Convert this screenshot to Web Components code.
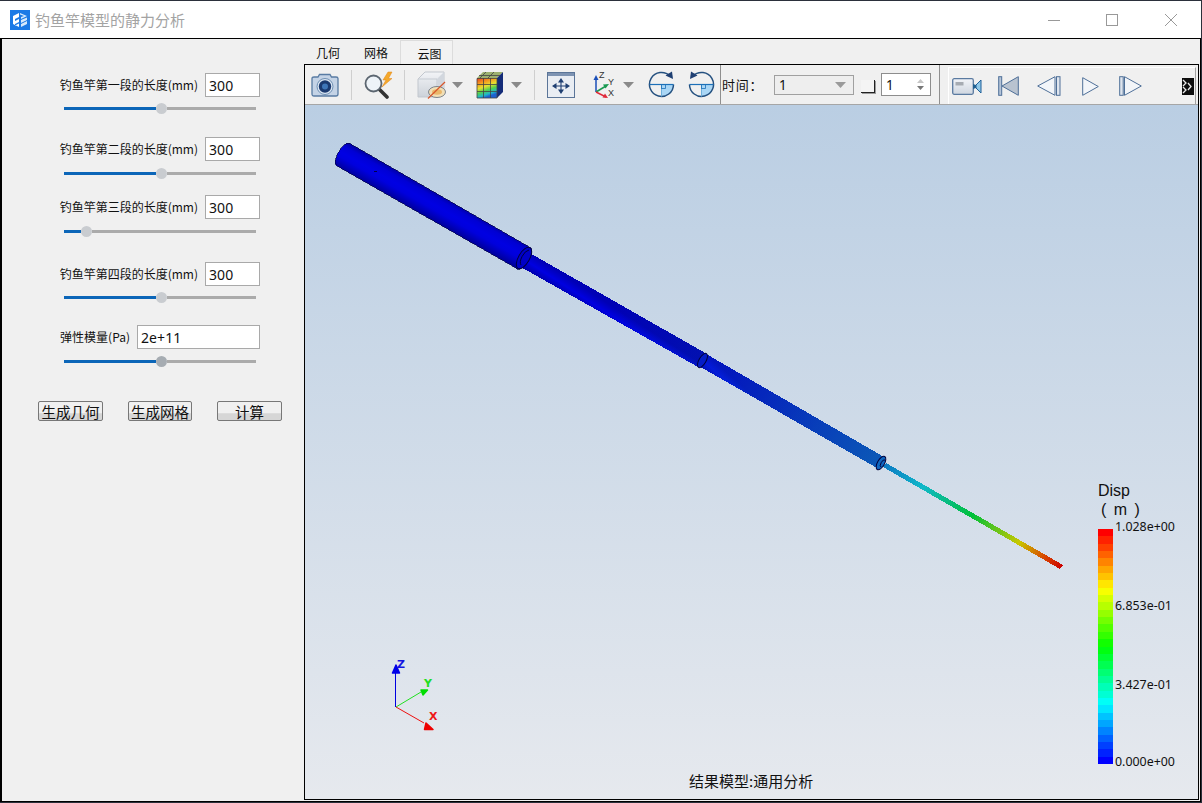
<!DOCTYPE html>
<html lang="zh">
<head>
<meta charset="utf-8">
<title>钓鱼竿模型的静力分析</title>
<style>
html, body { margin: 0; height: 100%; background: #2b303b; overflow: hidden; }
param-row.r1 { margin-top: 34px; --gap: 6px; }
param-row.r2 { margin-top: 23px; --gap: 7px; }
param-row.r3 { margin-top: 16px; --gap: 7px; }
param-row.r4 { margin-top: 25px; --gap: 6px; }
param-row.r5 { margin-top: 22px; --gap: 7px; }
</style>
</head>
<body>
<app-window>
  <title-bar slot="title" text="钓鱼竿模型的静力分析"></title-bar>
  <side-panel slot="side">
    <param-row class="r1" label="钓鱼竿第一段的长度(mm)" value="300" pos="97"></param-row>
    <param-row class="r2" label="钓鱼竿第二段的长度(mm)" value="300" pos="97"></param-row>
    <param-row class="r3" label="钓鱼竿第三段的长度(mm)" value="300" pos="22"></param-row>
    <param-row class="r4" label="钓鱼竿第四段的长度(mm)" value="300" pos="97"></param-row>
    <param-row class="r5" label="弹性模量(Pa)" value="2e+11" pos="97" wide></param-row>
  </side-panel>
  <result-pane slot="main"></result-pane>
</app-window>

<script>
// outer frame: title bar on top, black-edged client area below
customElements.define("app-window", class extends HTMLElement {
  constructor() {
    super();
    this.attachShadow({ mode: "open" });
    this.shadowRoot.innerHTML = `
<style>
:host {
  display: flex;
  flex-direction: column;
  width: 1202px;
  height: 803px;
  box-sizing: border-box;
  padding: 1px 1px 1px 0;
  font-family: "Noto Sans CJK SC", "Noto Sans", sans-serif;
  color: #111;
}
#client {
  flex: 1;
  min-height: 0;
  display: flex;
  background: #f0f0f0;
  border: 1px solid #000;
  border-left-width: 2px;
  border-right-width: 1px;
}
</style>
<slot name="title"></slot>
<div id="client">
  <slot name="side"></slot>
  <slot name="main"></slot>
</div>`;
  }
});

customElements.define("title-bar", class extends HTMLElement {
  constructor() {
    super();
    this.attachShadow({ mode: "open" });
    this.shadowRoot.innerHTML = `
<style>
:host {
  display: flex;
  align-items: center;
  height: 37px;
  background: #fff;
  padding-left: 10px;
  font-size: 15px;
  color: #a3a3a3;
}
svg { display: block; flex: none; }
#name { margin-left: 5px; }
#btns { margin-left: auto; margin-right: 1px; display: flex; }
.b { width: 58px; height: 37px; display: flex; align-items: center; justify-content: center; }
.b.mid { margin-right: 1px; }
</style>
<svg width="20" height="20" viewBox="0 0 20 20">
  <rect width="20" height="20" fill="#1b7ae6"/>
  <path d="M3 6 L9 3 V7 L5 9 V11 L9 9 V12 L5 14 V15.5 L9 13.5 V17 L3 14 Z" fill="#fff"/>
  <path d="M10 3 L17 6 L11 9 L11 7 L14 6 L10 4.5 Z M11 10 L17 7.5 V10 L11 13 Z M11 14 L17 11 V14 L11 17 Z" fill="#d6e9fb"/>
</svg>
<span id="name"></span>
<div id="btns">
  <div class="b"><svg width="12" height="12"><path d="M0 6.5 H12" stroke="#999"/></svg></div>
  <div class="b mid"><svg width="12" height="12"><rect x=".5" y=".5" width="11" height="11" fill="none" stroke="#999"/></svg></div>
  <div class="b"><svg width="12" height="12"><path d="M0 0 L12 12 M12 0 L0 12" stroke="#999"/></svg></div>
</div>`;
    this.shadowRoot.getElementById("name").textContent = this.getAttribute("text");
  }
});

customElements.define("side-panel", class extends HTMLElement {
  constructor() {
    super();
    this.attachShadow({ mode: "open" });
    this.shadowRoot.innerHTML = `
<style>
:host { display: flex; flex-direction: column; flex: none; width: 302px; }
#actions { display: flex; gap: 25px; padding-left: 36px; margin-top: 34px; }
qt-button:nth-child(2) { width: 64px; }
</style>
<slot></slot>
<div id="actions">
  <qt-button>生成几何</qt-button>
  <qt-button>生成网格</qt-button>
  <qt-button>计算</qt-button>
</div>`;
  }
});

customElements.define("param-row", class extends HTMLElement {
  constructor() {
    super();
    this.attachShadow({ mode: "open" });
    const wide = this.hasAttribute("wide");
    const pos = Number(this.getAttribute("pos"));
    this.shadowRoot.innerHTML = `
<style>
:host { display: block; }
#line { display: flex; align-items: center; justify-content: flex-end; padding-right: 44px; gap: 7px; }
label { font-size: 12px; white-space: nowrap; margin-bottom: 1px; }
#val {
  box-sizing: border-box;
  width: ${wide ? 123 : 55}px;
  height: 24px;
  background: #fff;
  border: 1px solid #a9a9a9;
  padding-left: 3px;
  font: 14px/24px "Noto Sans", sans-serif;
  letter-spacing: .1px;
}
#slide {
  display: flex;
  align-items: center;
  width: 192px;
  height: 11px;
  margin: var(--gap, 5px) 0 0 62px;
}
#fill { height: 3px; background: #0c66b8; width: ${pos - 5}px; }
#thumb { width: 11px; height: 11px; border-radius: 50%; background: ${wide ? "#a6acb2" : "#c9ccd0"}; flex: none; }
#rest { height: 3px; background: #ababab; flex: 1; }
</style>
<div id="line"><label>${this.getAttribute("label")}</label><div id="val">${this.getAttribute("value")}</div></div>
<div id="slide"><div id="fill"></div><div id="thumb"></div><div id="rest"></div></div>`;
  }
});

customElements.define("qt-button", class extends HTMLElement {
  constructor() {
    super();
    this.attachShadow({ mode: "open" });
    this.shadowRoot.innerHTML = `
<style>
:host {
  display: flex;
  align-items: center;
  justify-content: center;
  box-sizing: border-box;
  width: 65px;
  height: 20px;
  padding-top: 1px;
  border: 1px solid #777;
  border-radius: 2px;
  background: linear-gradient(#f0f0f0 60%, #d6d6d6 65%);
  font-size: 14.5px;
  line-height: 18px;
  white-space: nowrap;
}
</style>
<slot></slot>`;
  }
});

customElements.define("result-pane", class extends HTMLElement {
  constructor() {
    super();
    this.attachShadow({ mode: "open" });
    this.shadowRoot.innerHTML = `
<style>
:host { display: flex; flex-direction: column; flex: 1; min-width: 0; padding-right: 1px; padding-bottom: 1px; box-sizing: border-box; }
#tabs { display: flex; height: 24px; margin-top: 1px; font-size: 12px; line-height: 26px; }
.tab { text-align: center; }
.tab.on { width: 53px; box-sizing: border-box; border: 1px solid #dcdcdc; border-bottom: 0; background: #f2f2f2; line-height: 25px; padding-left: 6px; }
#frame { flex: 1; min-height: 0; display: flex; flex-direction: column; border: 1px solid #000; }
</style>
<div id="tabs">
  <div class="tab" style="width:48px">几何</div>
  <div class="tab" style="width:48px">网格</div>
  <div class="tab on">云图</div>
</div>
<div id="frame">
  <tool-bar></tool-bar>
  <model-view></model-view>
</div>`;
  }
});

customElements.define("tool-bar", class extends HTMLElement {
  constructor() {
    super();
    this.attachShadow({ mode: "open" });
    const arrow = m => `<svg style="margin-left:${m}px" width="11" height="6" viewBox="0 0 11 6"><path d="M0 0 H11 L5.5 6 Z" fill="#8a8a8a"/></svg>`;
    const sep = m => `<i class="sep" style="margin-left:${m}px"></i>`;
    this.shadowRoot.innerHTML = `
<style>
:host {
  display: flex;
  align-items: center;
  flex: none;
  height: 39px;
  background: #f0f0f0;
  border-bottom: 1px solid #a6a6a6;
  font-size: 13px;
}
svg { display: block; flex: none; }
.sep { display: block; flex: none; width: 1px; height: 30px; background: #cfcfcf; }
.full { display: block; flex: none; width: 1px; height: 39px; background: #8f8f8f; }
#time { margin-left: 1px; width: 52px; flex: none; white-space: nowrap; letter-spacing: .7px; }
#combo {
  display: flex; align-items: center; justify-content: space-between; flex: none;
  box-sizing: border-box; width: 80px; height: 20px;
  border: 1px solid #a0a0a0; background: #eee; padding: 0 7px 0 4px;
  font: 13.5px "Noto Sans", sans-serif;
}
#check {
  flex: none; box-sizing: border-box; width: 14px; height: 13px; margin: 3px 0 0 7px;
  background: #f4f4f4; border-right: 1px solid #222; border-bottom: 1px solid #222;
  box-shadow: 1px 1px 0 #9a9a9a;
}
#spin {
  display: flex; align-items: center; justify-content: space-between; flex: none;
  box-sizing: border-box; width: 50px; height: 23px; margin-left: 6px;
  border: 1px solid #8d8d8d; background: #fff; padding: 0 6px 0 4px;
  font: 13.5px "Noto Sans", sans-serif;
}
#play {
  display: flex; align-items: center; flex: none; align-self: flex-end;
  box-sizing: border-box; width: 248px; height: 37px; margin-left: 8px;
  background: #f0f0f0; border-top: 1px solid #fff; border-left: 1px solid #fff; border-right: 1px solid #a0a0a0;
}
</style>
<svg style="margin-left:6px" width="28" height="24" viewBox="0 0 28 24">
  <path d="M1 5.5 Q1 4 3 4 H7 L8.5 1.5 H19 L20.5 4 H25 Q27 4 27 5.5 V21 Q27 23 25 23 H3 Q1 23 1 21 Z" fill="#c4d3e6" stroke="#587ba3" stroke-width="1.3"/>
  <circle cx="14" cy="13.5" r="8" fill="#dbe6f2" stroke="#6e8fb3"/>
  <circle cx="14" cy="13.5" r="6.2" fill="#1b3a70"/>
  <circle cx="14" cy="13.5" r="3" fill="#3f76b8"/>
</svg>
${sep(12)}
<svg style="margin-left:12px" width="30" height="28" viewBox="0 0 30 28">
  <path d="M15 18 L23 26" stroke="#333" stroke-width="3.6" stroke-linecap="round"/>
  <circle cx="9.500" cy="12.500" r="8" fill="#eef3f8" stroke="#5c6670" stroke-width="1.800"/>
  <path d="M24 1 L19 9 H22 L18 16 L28 7.500 H24.500 L28 1 Z" fill="#f4a82a" stroke="#e08518" stroke-width=".5"/>
</svg>
${sep(10)}
<svg style="margin-left:12px" width="29" height="28" viewBox="0 0 29 28">
  <defs><linearGradient id="cf" x1="0" y1="0" x2="0" y2="1"><stop offset="0" stop-color="#f2f4f7"/><stop offset="1" stop-color="#cdd2d9"/></linearGradient></defs>
  <path d="M1 8 L8 1 H27 V19 L20 26 H1 Z" fill="url(#cf)" stroke="#c2c7ce"/>
  <path d="M1 8 H20 V26" fill="none" stroke="#c6cbd2"/>
  <path d="M20 8 L27 1 V19 L20 26 Z" fill="#d2d7de"/>
  <ellipse cx="20" cy="21" rx="8.500" ry="5.500" fill="#f1dfb6" stroke="#7e858d"/>
  <ellipse cx="20" cy="21" rx="5" ry="2.800" fill="#eab76a"/>
  <path d="M11 27.500 L28 11" stroke="#d8562a" stroke-width="1.200"/>
</svg>
${arrow(6)}
<svg style="margin-left:13px" width="28" height="28" viewBox="0 0 28 28">
  <defs>
    <linearGradient id="rb" x1="0" y1="0" x2=".35" y2="1">
      <stop offset="0" stop-color="#e83a20"/><stop offset=".3" stop-color="#f4a020"/>
      <stop offset=".5" stop-color="#e8e030"/><stop offset=".7" stop-color="#50d050"/>
      <stop offset=".88" stop-color="#20b8c8"/><stop offset="1" stop-color="#1c60d0"/>
    </linearGradient>
  </defs>
  <path d="M1 7 L7 1 H27 L21 7 Z" fill="#9cb070"/>
  <path d="M21 7 L27 1 V21 L21 27 Z" fill="#142c78"/>
  <rect x="1" y="7" width="20" height="20" fill="url(#rb)"/>
  <path d="M7.500 7 V27 M14.500 7 V27 M1 13.500 H21 M1 20.500 H21 M1 7.500 H21 V27 H1 Z M10 1 L4 7 M18 1 L12 7 M3 4.500 H24" fill="none" stroke="#444" stroke-width=".8"/>
</svg>
${arrow(7)}
${sep(12)}
<svg style="margin-left:12px" width="28" height="26" viewBox="0 0 28 26">
  <rect x=".5" y=".5" width="27" height="25" fill="#e9edf3" stroke="#5b7598"/>
  <rect x="1" y="1" width="26" height="3" fill="#7d93b2"/>
  <g fill="#1f3f72" stroke="#1f3f72">
    <path d="M14 8 V20 M7 14 H21" stroke-width="1.100"/>
    <path d="M14 6 L11 10.500 H17 Z M14 22 L11 17.500 H17 Z M5 14 L9.500 11 V17 Z M23 14 L18.500 11 V17 Z" stroke="none"/>
  </g>
</svg>
<svg style="margin-left:18px" width="23" height="27" viewBox="0 0 23 27">
  <path d="M3 21 V7" stroke="#1b4fb8" stroke-width="1.500"/><path d="M3 4 L.5 9 H5.500 Z" fill="#1b4fb8"/>
  <path d="M3 21 L13 15" stroke="#1a9a50" stroke-width="1.500"/><path d="M16 13 L10 13.500 L12.500 17.500 Z" fill="#1a9a50"/>
  <path d="M3 21 L13 26" stroke="#e02a3a" stroke-width="1.500"/>
  <path d="M15 27 L9.500 26.500 L12 22.500 Z" fill="#e02a3a"/>
  <text x="6" y="7" font-family="Liberation Sans" font-size="9" fill="#333">Z</text>
  <text x="15" y="14" font-family="Liberation Sans" font-size="9" fill="#333">Y</text>
  <text x="15" y="25" font-family="Liberation Sans" font-size="9" fill="#333">X</text>
</svg>
${arrow(7)}
<svg style="margin-left:14px" width="27" height="27" viewBox="0 0 27 27">
  <path d="M13.500 13.500 H25.500 A12 12 0 0 1 13.500 25.500 Z" fill="#a9d6f5"/>
  <path d="M22 5 A12 12 0 1 0 25.500 13.500" fill="none" stroke="#24507f" stroke-width="1.500"/>
  <path d="M1.500 13.500 H25.500" stroke="#1d70b8" stroke-width="1.200"/>
  <path d="M13.500 13.500 V25.500" stroke="#6fb0dc"/>
  <rect x="13.500" y="13.500" width="4" height="4" fill="none" stroke="#1d70b8" stroke-width=".8"/>
  <path d="M25 8 L24 0.500 L17.500 4.500 Z" fill="#1f3f72"/>
</svg>
<svg style="margin-left:13px" width="27" height="27" viewBox="0 0 27 27">
  <path d="M13.500 13.500 H25.500 A12 12 0 0 1 13.500 25.500 Z" fill="#a9d6f5"/>
  <path d="M5 5 A12 12 0 1 1 1.500 13.500" fill="none" stroke="#24507f" stroke-width="1.500"/>
  <path d="M1.500 13.500 H25.500" stroke="#1d70b8" stroke-width="1.200"/>
  <path d="M13.500 13.500 V25.500" stroke="#6fb0dc"/>
  <rect x="13.500" y="13.500" width="4" height="4" fill="none" stroke="#1d70b8" stroke-width=".8"/>
  <path d="M2 8 L3 0.500 L9.500 4.500 Z" fill="#1f3f72"/>
</svg>
<i class="full" style="margin-left:5px"></i>
<span id="time">时间：</span>
<div id="combo"><span>1</span><svg width="11" height="6" viewBox="0 0 11 6"><path d="M0 0 H11 L5.500 6 Z" fill="#9a9a9a"/></svg></div>
<div id="check"></div>
<div id="spin"><span>1</span><svg width="7" height="11" viewBox="0 0 7 11"><path d="M3.500 0 L7 4 H0 Z" fill="#c6c6c6"/><path d="M3.500 11 L0 7 H7 Z" fill="#777"/></svg></div>
<i class="full" style="margin-left:8px"></i>
<div id="play">
  <svg style="margin-left:3px" width="30" height="17" viewBox="0 0 30 17">
    <defs><linearGradient id="vb" x1="0" y1="0" x2="0" y2="1"><stop offset="0" stop-color="#f2f4f8"/><stop offset="1" stop-color="#cfd6e0"/></linearGradient></defs>
    <rect x=".7" y=".7" width="20.600" height="15.600" rx="1.500" fill="url(#vb)" stroke="#5a7aa0" stroke-width="1.300"/>
    <rect x="3.500" y="4" width="8" height="3.500" fill="#a6abb2"/>
    <path d="M21 6 L24 7 V10 L21 11 Z" fill="#23608f"/>
    <path d="M24 7 L29 2 V15 L24 10 Z" fill="#8fc8e8" stroke="#1f5f98"/>
  </svg>
  <svg style="margin-left:16px" width="21" height="20" viewBox="0 0 21 20">
    <rect x=".7" y=".7" width="3" height="18.600" fill="#b5c4d8" stroke="#4e6f98"/>
    <path d="M20.300 .7 V19.300 L4 10 Z" fill="#b9c3d0" stroke="#4e6f98"/>
  </svg>
  <svg style="margin-left:18px" width="24" height="20" viewBox="0 0 24 20">
    <path d="M18 .7 V19.300 L.7 10 Z" fill="#f2f5f9" stroke="#4e6f98"/>
    <rect x="19.500" y=".7" width="3.500" height="18.600" fill="#dfe5ee" stroke="#4e6f98"/>
  </svg>
  <svg style="margin-left:21px" width="17" height="19" viewBox="0 0 17 19">
    <path d="M.7 .7 V18.300 L16.300 9.500 Z" fill="#f2f5f9" stroke="#4e6f98"/>
  </svg>
  <svg style="margin-left:20px" width="23" height="20" viewBox="0 0 23 20">
    <rect x=".7" y=".7" width="3.500" height="18.600" fill="#dfe5ee" stroke="#4e6f98"/>
    <path d="M5.500 .7 V19.300 L22.300 10 Z" fill="#f2f5f9" stroke="#4e6f98"/>
  </svg>
  <svg style="margin-left:40px" width="12" height="17" viewBox="0 0 12 17">
    <rect width="12" height="17" fill="#0c0c0c"/>
    <path d="M1 2 L4 5 L1 8 M1 9 L4 12 L1 15 M6 5 L9 8.500 L6 12" fill="none" stroke="#e8e8e8" stroke-width="1.300"/>
  </svg>
</div>`;
  }
});

// the 3D view: scene and legend sit on a free canvas
customElements.define("model-view", class extends HTMLElement {
  constructor() {
    super();
    this.attachShadow({ mode: "open" });
    this.shadowRoot.innerHTML = `
<style>
:host {
  display: block;
  position: relative;
  flex: 1;
  min-height: 0;
  background: linear-gradient(#bacee3, #e6e9ee);
  overflow: hidden;
}
#scene { position: absolute; left: 0; top: 0; display: block; }
#info { position: absolute; left: 384px; top: 666px; font-size: 15px; line-height: 20px; white-space: nowrap; }
color-legend { position: absolute; left: 793px; top: 376px; }
</style>
<svg id="scene" width="893" height="694" viewBox="305 105 893 694">
  <defs>
    <linearGradient id="along" gradientUnits="userSpaceOnUse" x1="345" y1="150" x2="883" y2="463">
      <stop offset="0" stop-color="#0000e4"/><stop offset=".5" stop-color="#0000e0"/>
      <stop offset=".72" stop-color="#0420d8"/><stop offset="1" stop-color="#0e70d0"/>
    </linearGradient>
    <linearGradient id="tip" gradientUnits="userSpaceOnUse" x1="883" y1="465" x2="1062" y2="567">
      <stop offset="0" stop-color="#0c78c4"/><stop offset=".22" stop-color="#10b8c8"/>
      <stop offset=".5" stop-color="#00c038"/><stop offset=".76" stop-color="#c8c800"/>
      <stop offset=".9" stop-color="#d84800"/><stop offset="1" stop-color="#cc0000"/>
    </linearGradient>
    <linearGradient id="sh1" gradientUnits="userSpaceOnUse" x1="349" y1="143" x2="336" y2="166">
      <stop offset="0" stop-color="#000050" stop-opacity=".45"/><stop offset=".2" stop-color="#000050" stop-opacity=".1"/>
      <stop offset=".45" stop-color="#000050" stop-opacity="0"/><stop offset=".62" stop-color="#000050" stop-opacity=".04"/>
      <stop offset=".78" stop-color="#000050" stop-opacity=".22"/><stop offset="1" stop-color="#000050" stop-opacity=".5"/>
    </linearGradient>
    <linearGradient id="sh2" gradientUnits="userSpaceOnUse" x1="528" y1="252" x2="519" y2="266">
      <stop offset="0" stop-color="#000050" stop-opacity=".3"/><stop offset=".5" stop-color="#000050" stop-opacity="0"/>
      <stop offset="1" stop-color="#000050" stop-opacity=".4"/>
    </linearGradient>
    <linearGradient id="sh3" gradientUnits="userSpaceOnUse" x1="708" y1="355" x2="698" y2="366">
      <stop offset="0" stop-color="#000050" stop-opacity=".2"/><stop offset=".5" stop-color="#000050" stop-opacity="0"/>
      <stop offset="1" stop-color="#000050" stop-opacity=".3"/>
    </linearGradient>
  </defs>
  <g shape-rendering="crispEdges">
    <path d="M708 355 L884 457 A3.500 8 30 0 1 877 468 L697 365 Z" fill="url(#along)"/>
    <path d="M708 355 L884 457 A3.500 8 30 0 1 877 468 L697 365 Z" fill="url(#sh3)"/>
    <path d="M528 252 L707 354 L698 367 L519 266 Z" fill="url(#along)"/>
    <path d="M528 252 L707 354 L698 367 L519 266 Z" fill="url(#sh2)"/>
    <path d="M349 143 L531 248 A5 13 30 0 1 516 268 L337 166 A5 13 30 0 1 349 143 Z" fill="url(#along)" stroke="#00004a" stroke-width=".7"/>
    <path d="M349 143 L531 248 A5 13 30 0 1 516 268 L337 166 A5 13 30 0 1 349 143 Z" fill="url(#sh1)"/>
    <path d="M886 463 L1063 565 L1060 569 L883 467 Z" fill="url(#tip)"/>
    <rect x="374" y="171" width="3" height="1" fill="#00004a"/>
  </g>
  <g stroke="#00003c" stroke-width="1">
    <ellipse cx="524" cy="258" rx="5.500" ry="12" transform="rotate(30 524 258)" fill="#0000c8"/>
    <path d="M529 250 A4.500 9 30 0 0 521 265" fill="none"/>
    <ellipse cx="702.500" cy="360.500" rx="3.500" ry="8" transform="rotate(30 702.500 360.500)" fill="#041cc8"/>
    <ellipse cx="881" cy="463" rx="3.500" ry="7.500" transform="rotate(30 881 463)" fill="#0e66c0"/>
    <path d="M885 460 A2 4 30 0 0 881 467" fill="none"/>
  </g>
  <g>
    <path d="M395.500 707 V668" stroke="#0000e0" stroke-width="1"/>
    <path d="M396 665 L392.500 673 H399.500 Z" fill="#0000e8" stroke="#0000e8" stroke-width="1.500" stroke-linejoin="round"/>
    <path d="M396 707 L421 692" stroke="#22e022" stroke-width="1"/>
    <path d="M427.500 690 L421 690 L423 695 Z" fill="#00dd00" stroke="#00dd00" stroke-width="1.500" stroke-linejoin="round"/>
    <path d="M396 707 L424 723" stroke="#ee1010"/>
    <path d="M433 729.500 L426 723 L424.500 729.500 Z" fill="#ee0000" stroke="#ee0000" stroke-width="1.500" stroke-linejoin="round"/>
    <text x="397" y="668" font-family="DejaVu Sans" font-weight="700" font-size="11" fill="#1414e0">Z</text>
    <text x="424" y="687" font-family="DejaVu Sans" font-weight="700" font-size="11" fill="#22dd22">Y</text>
    <text x="429" y="720" font-family="DejaVu Sans" font-weight="700" font-size="11" fill="#ee1818">X</text>
  </g>
</svg>
<color-legend></color-legend>
<div id="info">结果模型:通用分析</div>`;
  }
});

customElements.define("color-legend", class extends HTMLElement {
  constructor() {
    super();
    this.attachShadow({ mode: "open" });
    let bands = "";
    for (let i = 0; i < 32; i++) {
      bands += `<i style="background:hsl(${Math.round(i * 240 / 31)},100%,50%)"></i>`;
    }
    this.shadowRoot.innerHTML = `
<style>
:host { display: block; width: 100px; color: #111; }
#head { font-size: 16px; line-height: 19px; font-family: "Liberation Sans", sans-serif; }
#unit { padding-left: 3px; word-spacing: 3px; }
#body { display: flex; margin-top: 10px; }
#bar { display: flex; flex-direction: column; width: 15px; height: 235px; flex: none; }
#bar i { display: block; flex: 1; }
#ticks {
  display: flex; flex-direction: column;
  margin: -9px 0 0 2px;
  font: 12.400px/14px "Noto Sans", sans-serif;
  white-space: nowrap;
}
#ticks span { margin-top: 65px; }
#ticks span:first-child { margin-top: 0; }
#ticks span:last-child { margin-top: 63px; }
</style>
<div id="head">Disp<div id="unit">( m )</div></div>
<div id="body">
  <div id="bar">${bands}</div>
  <div id="ticks"><span>1.028e+00</span><span>6.853e-01</span><span>3.427e-01</span><span>0.000e+00</span></div>
</div>`;
  }
});
</script>
</body>
</html>
